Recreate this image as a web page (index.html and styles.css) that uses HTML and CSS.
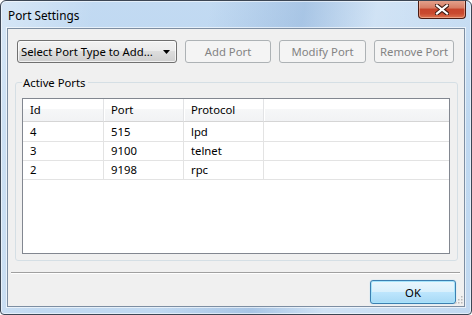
FILE: index.html
```html
<!DOCTYPE html>
<html>
<head>
<meta charset="utf-8">
<link rel="stylesheet" href="styles.css">
</head>
<body>
<div class="window">
  <div class="titlebar">
    <span class="title">Port Settings</span>
    <button class="close" aria-label="Close">
      <svg width="14" height="11" viewBox="0 0 14 11">
        <path d="M2 1.5 L12 9.5 M12 1.5 L2 9.5" stroke="#3b1a12" stroke-width="4.2" stroke-linecap="square" fill="none"/>
        <path d="M2 1.5 L12 9.5 M12 1.5 L2 9.5" stroke="#ffffff" stroke-width="2.2" stroke-linecap="square" fill="none"/>
      </svg>
    </button>
  </div>
  <div class="client">
    <div class="toolbar">
      <div class="combo">
        <span class="combo-text">Select Port Type to Add...</span>
        <svg class="combo-arrow" width="7" height="4" viewBox="0 0 7 4"><path d="M0 0 H7 L3.5 4 Z" fill="#000"/></svg>
      </div>
      <button class="btn btn-add" disabled>Add Port</button>
      <button class="btn btn-modify" disabled>Modify Port</button>
      <button class="btn btn-remove" disabled>Remove Port</button>
    </div>
    <fieldset class="group">
      <legend class="group-label">Active Ports</legend>
      <div class="list">
        <div class="row header">
          <div class="cell">Id</div>
          <div class="cell">Port</div>
          <div class="cell">Protocol</div>
          <div class="cell last"></div>
        </div>
        <div class="row">
          <div class="cell">4</div>
          <div class="cell">515</div>
          <div class="cell">lpd</div>
          <div class="cell last"></div>
        </div>
        <div class="row">
          <div class="cell">3</div>
          <div class="cell">9100</div>
          <div class="cell">telnet</div>
          <div class="cell last"></div>
        </div>
        <div class="row">
          <div class="cell">2</div>
          <div class="cell">9198</div>
          <div class="cell">rpc</div>
          <div class="cell last"></div>
        </div>
      </div>
    </fieldset>
    <div class="separator"></div>
    <div class="footer">
      <button class="btn-ok">OK</button>
    </div>
    <svg class="grip" width="8" height="8" viewBox="0 0 8 8">
      <rect x="6" y="0" width="1.5" height="1.5" fill="#b9b9b9"/>
      <rect x="3" y="3" width="1.5" height="1.5" fill="#b9b9b9"/>
      <rect x="6" y="3" width="1.5" height="1.5" fill="#b9b9b9"/>
      <rect x="0" y="6" width="1.5" height="1.5" fill="#b9b9b9"/>
      <rect x="3" y="6" width="1.5" height="1.5" fill="#b9b9b9"/>
      <rect x="6" y="6" width="1.5" height="1.5" fill="#b9b9b9"/>
    </svg>
  </div>
</div>
</body>
</html>
```

FILE: styles.css
```css
html, body {
  margin: 0;
  padding: 0;
  background: #ffffff;
}

body {
  font-family: "Segoe UI", "Noto Sans", sans-serif;
  font-size: 11.3px;
  color: #000;
}

.window {
  width: 472px;
  height: 315px;
  box-sizing: border-box;
  border: 1px solid #3c4654;
  border-radius: 6px 6px 4px 4px;
  padding: 0 6px 7px 6px;
  display: flex;
  flex-direction: column;
  overflow: hidden;
  background:
    linear-gradient(100deg, rgba(255,255,255,0.35) 0%, rgba(255,255,255,0) 18%, rgba(255,255,255,0) 40%, rgba(110,150,200,0.3) 58%, rgba(255,255,255,0.25) 72%, rgba(255,255,255,0) 100%),
    linear-gradient(180deg, #c2daf2 0%, #bad5ef 40%, #c1d9f1 100%);
  box-shadow: inset 0 0 0 1px rgba(255,255,255,0.55);
}

.titlebar {
  height: 27px;
  flex: none;
  display: flex;
  justify-content: space-between;
  align-items: flex-start;
}

.title {
  margin-left: 1px;
  line-height: 28px;
  font-size: 11.8px;
  color: #000;
}

.close {
  width: 48px;
  height: 19px;
  margin: -1px -1px 0 0;
  padding: 0;
  border: 1px solid #4a1b12;
  border-top: none;
  border-radius: 0 0 4px 4px;
  background: linear-gradient(180deg, #e5a590 0%, #d77c63 45%, #c7442b 50%, #c94a2f 75%, #dc7350 100%);
  box-shadow: inset 0 0 0 1px rgba(255,220,200,0.45);
  display: flex;
  align-items: center;
  justify-content: center;
}

.client {
  flex: 1;
  position: relative;
  border: 1px solid #7d8ea2;
  background: #f0f0f0;
  box-shadow: 0 0 0 1px rgba(255,255,255,0.6);
  display: flex;
  flex-direction: column;
}

.toolbar {
  display: flex;
  gap: 8px;
  height: 23px;
  margin: 11px 0 0 9px;
}

.combo {
  width: 160px;
  height: 23px;
  box-sizing: border-box;
  border: 1px solid #707070;
  border-radius: 3px;
  background: linear-gradient(180deg, #f2f2f2 0%, #ebebeb 49%, #dddddd 50%, #cfcfcf 100%);
  box-shadow: inset 0 0 0 1px rgba(255,255,255,0.7);
  display: flex;
  align-items: center;
  justify-content: space-between;
  padding: 0 6px 0 3px;
}

.combo-text {
  line-height: 21px;
}

.combo-arrow {
  display: block;
}

.btn {
  height: 23px;
  box-sizing: border-box;
  border: 1px solid #adb2b5;
  border-radius: 3px;
  background: #f4f4f4;
  color: #838383;
  font: inherit;
  padding: 0;
}

.btn-add { width: 86px; }
.btn-modify { width: 87px; }
.btn-remove { width: 80px; }

.group {
  margin: 12px 6px 0 7px;
  padding: 0 7px 6px 6px;
  border: 1px solid #d5dfe5;
  border-radius: 3px;
  min-inline-size: 0;
}

.group-label {
  margin-left: 0;
  padding: 0 2px 0 1px;
  line-height: 15px;
}

.list {
  margin-top: 8px;
  height: 156px;
  box-sizing: border-box;
  border: 1px solid #828790;
  background: #ffffff;
}

.row {
  display: grid;
  grid-template-columns: 81px 80px 80px 1fr;
  height: 19px;
}

.cell {
  box-sizing: border-box;
  border-right: 1px solid #e3e3e3;
  border-bottom: 1px solid #e3e3e3;
  padding-left: 7px;
  line-height: 19px;
  white-space: nowrap;
}

.cell.last {
  border-right: none;
}

.row.header {
  height: 23px;
  background: linear-gradient(180deg, #ffffff 0%, #ffffff 42%, #f6f7f8 43%, #f1f2f4 100%);
}

.row.header .cell {
  line-height: 22px;
  border-bottom: 1px solid #d5d5d5;
  border-right: 1px solid #e2e3e5;
  box-shadow: 1px 0 0 #ffffff;
}

.row.header .cell.last {
  border-right: none;
  box-shadow: none;
}

.separator {
  margin: 11px 4px 0 3px;
  height: 0;
  border-top: 1px solid #a0a0a0;
  border-bottom: 1px solid #ffffff;
}

.footer {
  display: flex;
  justify-content: flex-end;
  margin: 6px 8px 0 0;
}

.btn-ok {
  width: 86px;
  height: 24px;
  box-sizing: border-box;
  border: 1px solid #3c7fb1;
  border-radius: 3px;
  background: linear-gradient(180deg, #eaf6fd 0%, #d9f0fc 49%, #bee6fd 50%, #a7d9f5 100%);
  box-shadow: inset 0 0 0 1px #a6e4fb, 0 0 1px #7fc8f0;
  font: inherit;
  color: #000;
  padding: 0;
}

.grip {
  position: absolute;
  right: 1px;
  bottom: 2px;
}
```
